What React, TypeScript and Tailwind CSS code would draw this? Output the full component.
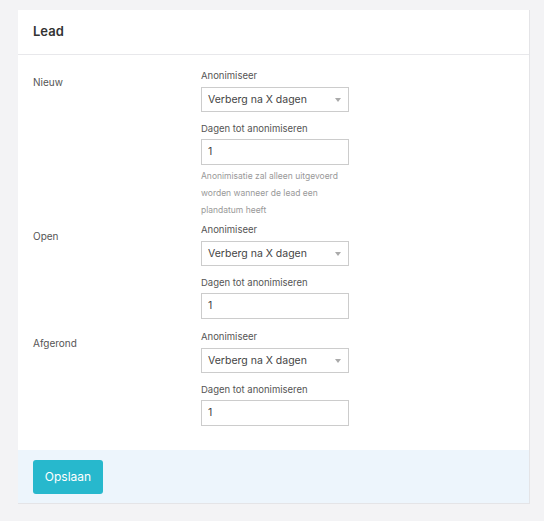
import React from "react";

// ─── Data ────────────────────────────────────────────────────────────────────

interface StatusRule {
  id: string;
  label: string;
  days: string;
  hint?: string;
}

const RULES: StatusRule[] = [
  {
    id: "new",
    label: "Nieuw",
    days: "1",
    hint: "Anonimisatie zal alleen uitgevoerd worden wanneer de lead een plandatum heeft",
  },
  { id: "open", label: "Open", days: "1" },
  { id: "done", label: "Afgerond", days: "1" },
];

// ─────────────────────────────────────────────────────────────────────────────

export default function App() {
  return (
    <div className="min-h-screen bg-[#f3f3f5] pt-[10px] pl-[18px] font-['Inter',sans-serif]">
      <div className="w-[512px] bg-white border-r border-b border-[#e4e4e7]">

        {/* ── Header ─────────────────────────────────────────────────────── */}
        <div className="h-[45px] px-[15px] flex items-center border-b border-[#e8e8eb]">
          <h2 className="text-[13px] font-semibold text-[#333]">Lead</h2>
        </div>

        {/* ── Rules ──────────────────────────────────────────────────────── */}
        <div className="pt-[13px] pb-[14px] flex flex-col">
          {RULES.map((rule) => (
            <RuleRow key={rule.id} rule={rule} />
          ))}
        </div>

        {/* ── Footer ─────────────────────────────────────────────────────── */}
        <div className="bg-[#edf5fc] px-[15px] pt-[10px] pb-[9px]">
          <button className="h-[34px] w-[70px] rounded-[3px] bg-[#27b8cd] text-[12px] text-white">
            Opslaan
          </button>
        </div>

      </div>
    </div>
  );
}

// ─── Rule Row ────────────────────────────────────────────────────────────────

function RuleRow({ rule }: { rule: StatusRule }) {
  return (
    <div className="flex">
      <div className="w-[183px] pl-[15px] pt-[6px] text-[10px] leading-[16px] text-[#555]">
        {rule.label}
      </div>

      <div className="w-[148px] flex flex-col">
        <label className="text-[9.5px] leading-[16px] text-[#555]">Anonimiseer</label>
        <div className="mt-[3px] h-[25px] border border-[#ccc] flex items-center justify-between pl-[6px] pr-[7px]">
          <span className="text-[10.5px] text-[#444]">Verberg na X dagen</span>
          <svg width="6" height="4" viewBox="0 0 6 4" className="fill-[#aaa]">
            <path d="M0 0h6L3 4z" />
          </svg>
        </div>

        <label className="mt-[9px] text-[9.5px] leading-[16px] text-[#555]">
          Dagen tot anonimiseren
        </label>
        <div className="mt-[2px] h-[26px] border border-[#ccc] flex items-center px-[6px]">
          <span className="text-[10.5px] text-[#444]">{rule.days}</span>
        </div>

        {rule.hint ? (
          <p className="mt-[3px] mb-[3px] text-[8.5px] leading-[17px] text-[#999]">{rule.hint}</p>
        ) : (
          <div className="h-[10px]" />
        )}
      </div>
    </div>
  );
}
